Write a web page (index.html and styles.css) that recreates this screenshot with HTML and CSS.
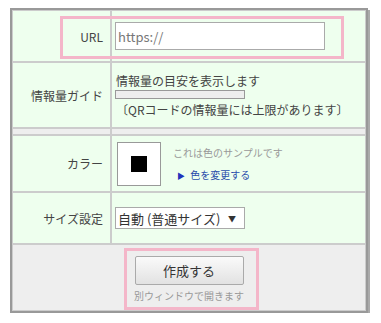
FILE: index.html
```html
<!DOCTYPE html>
<html lang="ja">
<head>
    <meta charset="UTF-8">
    <title>QRコード作成</title>
    <link rel="stylesheet" href="styles.css">
</head>
<body>
    <div class="wrap">
        <table class="form-table">
            <tr class="row-url">
                <th>URL</th>
                <td><input type="text" class="url-input" value="https://"></td>
            </tr>
            <tr class="row-guide">
                <th>情報量ガイド</th>
                <td>
                    <div class="guide-text">情報量の目安を表示します</div>
                    <div class="guide-bar"></div>
                    <div class="guide-text">〔QRコードの情報量には上限があります〕</div>
                </td>
            </tr>
            <tr class="row-space">
                <th></th>
                <td></td>
            </tr>
            <tr class="row-color">
                <th>カラー</th>
                <td>
                    <div class="color-box">
                        <div class="swatch"><span class="swatch-inner"></span></div>
                        <div class="color-info">
                            <div class="note">これは色のサンプルです</div>
                            <a class="change-link" href="#"><span class="arrow">▶</span> 色を変更する</a>
                        </div>
                    </div>
                </td>
            </tr>
            <tr class="row-size">
                <th>サイズ設定</th>
                <td>
                    <span class="select-wrap">
                        <select class="size-select">
                            <option>自動 (普通サイズ)</option>
                            <option>小</option>
                            <option>大</option>
                        </select>
                    </span>
                </td>
            </tr>
            <tr class="row-submit">
                <td colspan="2">
                    <button class="btn">作成する</button>
                    <div class="note">別ウィンドウで開きます</div>
                </td>
            </tr>
        </table>
        <div class="mark mark-url"></div>
        <div class="mark mark-btn"></div>
    </div>
</body>
</html>
```

FILE: styles.css
```css
body {
    margin: 8px 0 0 10px;
    background: #fff;
    font-family: "Noto Sans CJK JP", "Liberation Sans", sans-serif;
    font-size: 12px;
    color: #333;
}
.wrap {
    position: relative;
    width: 358px;
}
.form-table {
    width: 358px;
    border: 2px solid #999;
    border-spacing: 0;
    box-shadow: 2px 2px 0 #aaa;
}
.form-table th,
.form-table td {
    border: 1px solid #ccc;
    background: #efe;
    padding: 0 3px;
    vertical-align: middle;
}
.form-table th {
    width: 87px;
    text-align: right;
    font-weight: normal;
    padding-right: 7px;
    color: #444;
}
.row-url th, .row-url td { height: 50px; }
.row-guide th, .row-guide td { height: 64px; }
.row-space th, .row-space td { height: 5px; background: #eee; padding: 0; }
.row-color th, .row-color td { height: 55px; }
.row-size th, .row-size td { height: 50px; }
.row-submit td {
    height: 65px;
    background: #eee;
    text-align: center;
}
.url-input {
    display: block;
    width: 210px;
    height: 28px;
    box-sizing: border-box;
    border: 1px solid #aaa;
    padding: 0 2px;
    font-family: "Noto Sans CJK JP", "Liberation Sans", sans-serif;
    font-size: 13px;
    color: #777;
}
.guide-text {
    line-height: 17px;
    padding-left: 1px;
    color: #444;
}
.guide-bar {
    width: 130px;
    height: 9px;
    box-sizing: border-box;
    border: 1px solid #999;
    background: #eee;
    margin: 1px 0 2px;
}
.color-box {
    display: flex;
    align-items: center;
    gap: 12px;
    padding-left: 2px;
}
.swatch {
    width: 44px;
    height: 44px;
    box-sizing: border-box;
    border: 1px solid #999;
    background: #fff;
    display: flex;
    align-items: center;
    justify-content: center;
}
.swatch-inner {
    width: 16px;
    height: 16px;
    background: #000;
}
.note {
    font-size: 10px;
    color: #999;
}
.color-info .note {
    margin-bottom: 5px;
}
.change-link {
    font-size: 10px;
    color: #2a4dab;
    text-decoration: none;
    margin-left: 4px;
}
.arrow {
    font-size: 8px;
    color: #2233bb;
    margin-right: 3px;
}
.select-wrap {
    position: relative;
    display: inline-block;
}
.select-wrap::after {
    content: "▼";
    position: absolute;
    right: 9px;
    top: 6px;
    font-size: 8px;
    color: #333;
    pointer-events: none;
}
.size-select {
    appearance: none;
    width: 130px;
    height: 22px;
    border: 1px solid #aaa;
    background: #fff;
    padding: 0 2px;
    font-family: "Noto Sans CJK JP", "Liberation Sans", sans-serif;
    font-size: 13px;
    color: #333;
}
.btn {
    width: 109px;
    height: 29px;
    border: 1px solid #aaa;
    border-radius: 2px;
    background: linear-gradient(#fafafa, #e2e2e2);
    font-family: "Noto Sans CJK JP", "Liberation Sans", sans-serif;
    font-size: 13px;
    color: #333;
    margin-top: 4px;
}
.row-submit .note {
    margin-top: 3px;
}
.mark {
    position: absolute;
    border: 3px solid #f4b6c9;
    pointer-events: none;
}
.mark-url {
    left: 50px;
    top: 8px;
    width: 278px;
    height: 37px;
}
.mark-btn {
    left: 114px;
    top: 240px;
    width: 129px;
    height: 56px;
}
```
